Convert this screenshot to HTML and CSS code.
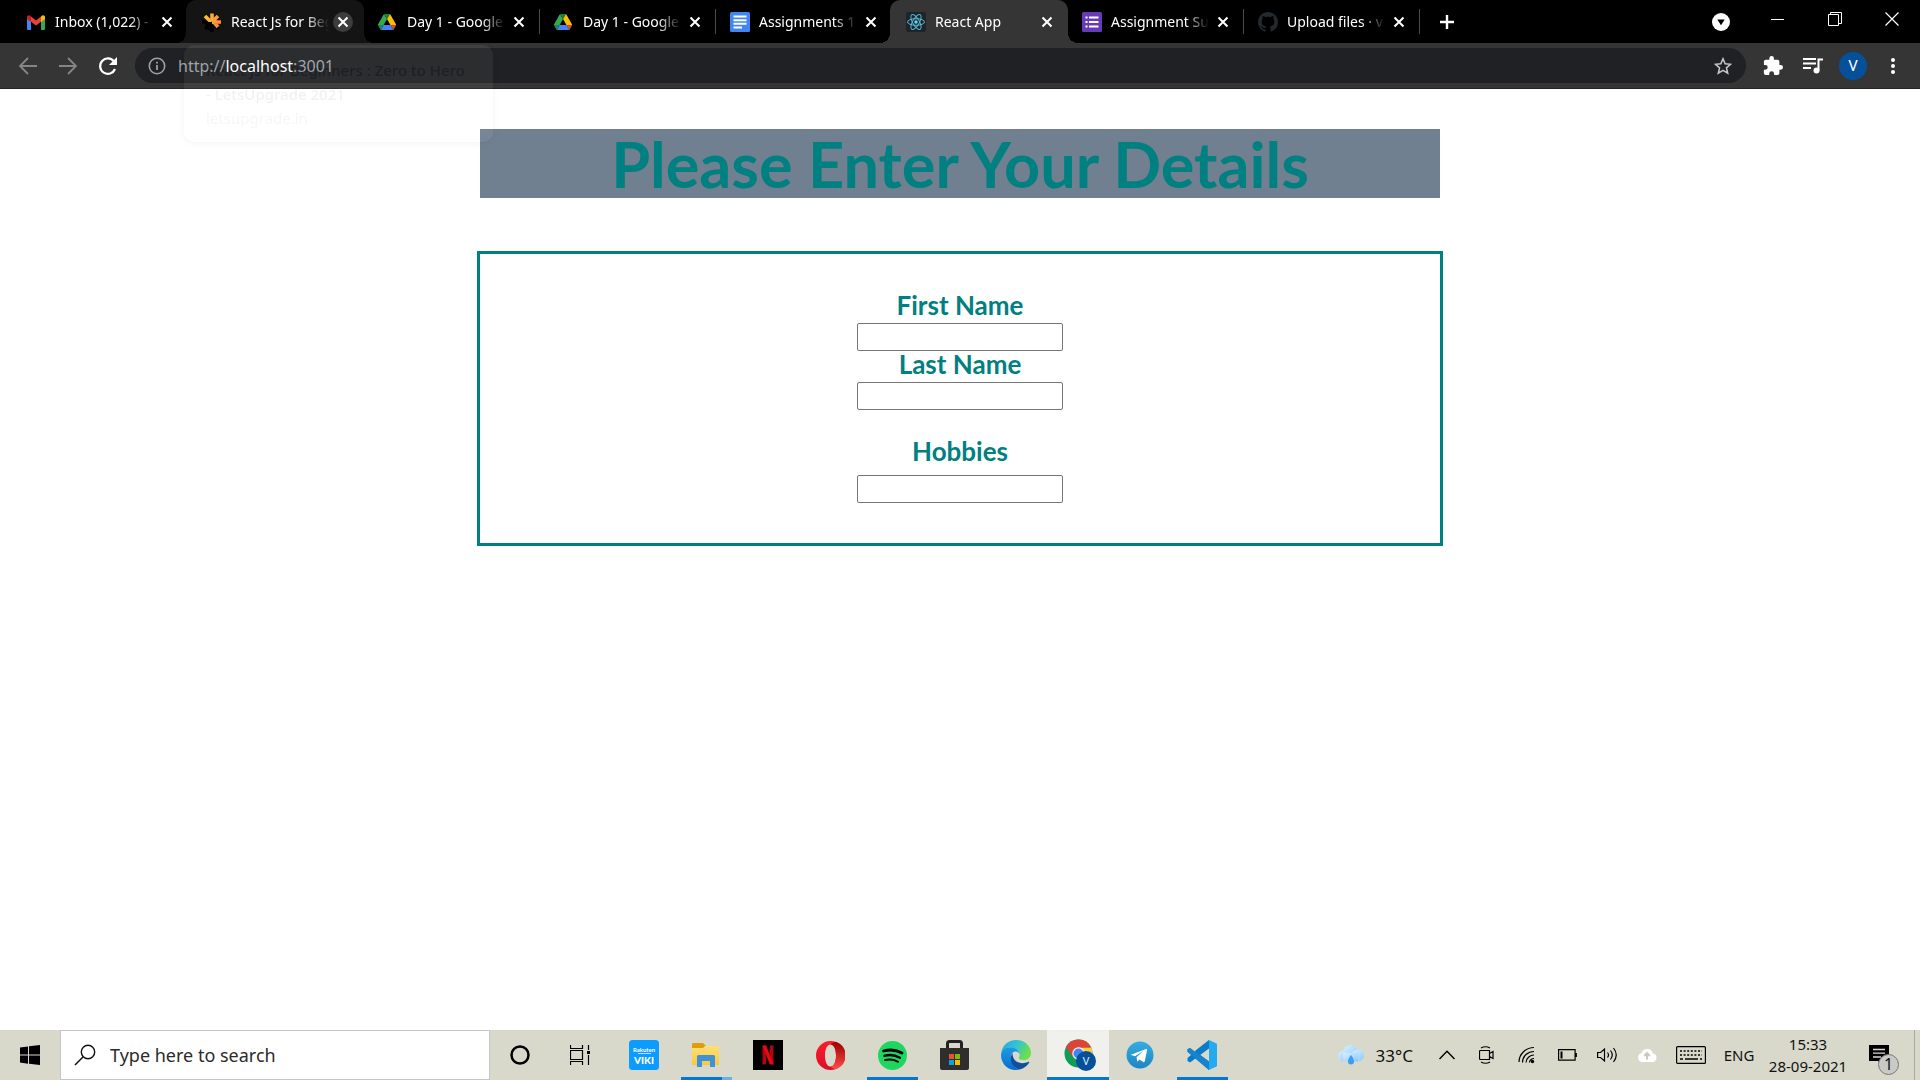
FILE: index.html
```html
<!DOCTYPE html>
<html lang="en">
<head>
<meta charset="utf-8">
<title>React App</title>
<link rel="stylesheet" href="styles.css">
</head>
<body>
<svg class="defs" aria-hidden="true">
  <defs>
    <linearGradient id="operaRed" x1="0" y1="0" x2="0" y2="1"><stop offset="0" stop-color="#ff1b2d"/><stop offset="1" stop-color="#d8102a"/></linearGradient>
    <linearGradient id="operaDark" x1="0" y1="0" x2="0" y2="1"><stop offset="0" stop-color="#9c0000"/><stop offset="1" stop-color="#ff4b4b"/></linearGradient>
    <linearGradient id="edgeTop" x1="0" y1="0" x2="1" y2="0.4"><stop offset="0" stop-color="#2aa5dc"/><stop offset="0.5" stop-color="#2fc2d8"/><stop offset="1" stop-color="#6be04a"/></linearGradient>
    <linearGradient id="edgeLeft" x1="0" y1="0" x2="0" y2="1"><stop offset="0" stop-color="#1b9de2"/><stop offset="1" stop-color="#0a6bd0"/></linearGradient>
    <linearGradient id="folder" x1="0" y1="0" x2="0" y2="1"><stop offset="0" stop-color="#ffdf78"/><stop offset="1" stop-color="#f9c840"/></linearGradient>
    <linearGradient id="cloudFill" x1="0" y1="0" x2="1" y2="1"><stop offset="0" stop-color="#d8eeff"/><stop offset="0.5" stop-color="#b4ddfb"/><stop offset="1" stop-color="#8ac8f8"/></linearGradient>
    <linearGradient id="tele" x1="0" y1="0" x2="0" y2="1"><stop offset="0" stop-color="#35ade1"/><stop offset="1" stop-color="#1c86c4"/></linearGradient>
    <linearGradient id="spark" x1="0" y1="0" x2="1" y2="0.3"><stop offset="0" stop-color="#ffc928"/><stop offset="1" stop-color="#ff8a3d"/></linearGradient>
    <symbol id="close" viewBox="0 0 12 12"><path d="M1.500 1.500l9 9M10.500 1.500l-9 9" fill="none" stroke="currentColor" stroke-width="2"/></symbol>
    <symbol id="drive" viewBox="0 0 87 78">
      <path fill="#1e8e3e" d="M6.600 66.850l3.850 6.650c.8 1.400 1.950 2.500 3.300 3.300L27.500 53H0c0 1.550.4 3.100 1.200 4.500z"/>
      <path fill="#34a853" d="M43.650 25L29.900 1.200c-1.350.8-2.500 1.900-3.300 3.300L1.200 48.500A9 9 0 0 0 0 53h27.500z"/>
      <path fill="#ea4335" d="M73.550 76.800c1.350-.8 2.500-1.900 3.300-3.300l1.600-2.750L86.100 57.500c.8-1.400 1.200-2.950 1.200-4.500H59.800l5.850 11.500z"/>
      <path fill="#188038" d="M43.650 25L57.400 1.200C56.050.4 54.500 0 52.900 0H34.400c-1.600 0-3.150.45-4.500 1.200z"/>
      <path fill="#4285f4" d="M59.800 53H27.500L13.750 76.800c1.350.8 2.900 1.200 4.500 1.200h50.800c1.600 0 3.150-.45 4.500-1.200z"/>
      <path fill="#fbbc04" d="M73.400 26.500L60.700 4.500c-.8-1.400-1.950-2.500-3.300-3.300L43.650 25 59.800 53h27.450c0-1.550-.4-3.100-1.200-4.500z"/>
    </symbol>
  </defs>
</svg>

<header class="browser">
  <nav class="tabs" aria-label="Tabs">
    <div class="tab">
      <svg class="favicon" viewBox="0 0 20 20"><path fill="#4285f4" d="M1 6l4 3v9H2.200A1.200 1.200 0 0 1 1 16.800z"/><path fill="#34a853" d="M15 9l4-3v10.800a1.200 1.200 0 0 1-1.200 1.200H15z"/><path fill="#fbbc04" d="M15 4.500l1-.8c1.200-1 3-.2 3 1.400V7l-4 3z"/><path fill="#ea4335" d="M5 9.800V4.600l5 3.800 5-3.800v5.200l-5 3.800z"/><path fill="#c5221f" d="M1 5.100C1 3.500 2.800 2.700 4 3.700l1 .8V10L1 7z"/></svg>
      <a class="title" href="#">Inbox (1,022) - m</a>
      <button class="close" aria-label="Close tab"><svg><use href="#close"/></svg></button>
    </div>
    <div class="tab hovered">
      <svg class="favicon" viewBox="0 0 20 20"><g fill="none" stroke-width="3.600"><path stroke="#000" d="M0 10h10M3 17l7-7M10 20V10M17 17l-5-5"/><path stroke="url(#spark)" d="M3 4l6 6M10 1.500l.1 8M16 4l-6 6M10 10.100l9-.1M11 9l5 6"/></g><path d="M2 10h8v8H6z"/></svg>
      <a class="title" href="#">React Js for Beg</a>
      <button class="close" aria-label="Close tab"><svg><use href="#close"/></svg></button>
    </div>
    <div class="tab">
      <svg class="favicon small"><use href="#drive"/></svg>
      <a class="title" href="#">Day 1 - Google</a>
      <button class="close" aria-label="Close tab"><svg><use href="#close"/></svg></button>
    </div>
    <div class="tab divided">
      <svg class="favicon small"><use href="#drive"/></svg>
      <a class="title" href="#">Day 1 - Google</a>
      <button class="close" aria-label="Close tab"><svg><use href="#close"/></svg></button>
    </div>
    <div class="tab divided">
      <svg class="favicon" viewBox="0 0 20 20"><rect width="20" height="20" rx="1.500" fill="#4285f4"/><path stroke="#fff" stroke-width="2" d="M3.500 4.500h13M3.500 8.200h13M3.500 11.800h13M3.500 15.500h8.500"/></svg>
      <a class="title" href="#">Assignments 1</a>
      <button class="close" aria-label="Close tab"><svg><use href="#close"/></svg></button>
    </div>
    <div class="tab active">
      <svg class="favicon" viewBox="0 0 20 20"><rect width="20" height="20" rx="2" fill="#20232a"/><g fill="none" stroke="#53b9d3" stroke-width="1"><ellipse cx="10" cy="10" rx="8.500" ry="3.300"/><ellipse cx="10" cy="10" rx="8.500" ry="3.300" transform="rotate(60 10 10)"/><ellipse cx="10" cy="10" rx="8.500" ry="3.300" transform="rotate(120 10 10)"/></g><circle cx="10" cy="10" r="1.700" fill="#61dafb"/></svg>
      <a class="title" href="#">React App</a>
      <button class="close" aria-label="Close tab"><svg><use href="#close"/></svg></button>
    </div>
    <div class="tab">
      <svg class="favicon" viewBox="0 0 20 20"><rect width="20" height="20" rx="1.500" fill="#673ab7"/><path stroke="#fff" stroke-width="2" d="M3.500 5.500h2M7 5.500h9.500M3.500 10h2M7 10h9.500M3.500 14.500h2M7 14.500h9.500"/></svg>
      <a class="title" href="#">Assignment Su</a>
      <button class="close" aria-label="Close tab"><svg><use href="#close"/></svg></button>
    </div>
    <div class="tab divided">
      <svg class="favicon" viewBox="0 0 16 16"><path fill="#24292e" d="M8 0C3.580 0 0 3.580 0 8c0 3.540 2.290 6.530 5.470 7.590.4.070.55-.17.55-.38 0-.19-.01-.82-.01-1.490-2.010.37-2.530-.49-2.690-.94-.09-.23-.48-.94-.82-1.130-.28-.15-.68-.52-.01-.53.63-.01 1.080.58 1.230.82.72 1.210 1.870.87 2.330.66.070-.52.28-.87.51-1.070-1.780-.2-3.640-.89-3.640-3.950 0-.87.31-1.590.82-2.150-.08-.2-.36-1.020.08-2.120 0 0 .67-.21 2.200.82.64-.18 1.320-.27 2-.27s1.360.09 2 .27c1.530-1.040 2.200-.82 2.200-.82.44 1.100.16 1.920.08 2.120.51.56.82 1.270.82 2.150 0 3.070-1.870 3.750-3.650 3.950.29.25.54.73.54 1.480 0 1.070-.01 1.930-.01 2.200 0 .21.15.46.55.38A8 8 0 0 0 16 8c0-4.420-3.580-8-8-8z"/></svg>
      <a class="title" href="#">Upload files · v</a>
      <button class="close" aria-label="Close tab"><svg><use href="#close"/></svg></button>
    </div>
    <button class="newtab divided" aria-label="New tab"><svg viewBox="0 0 16 16"><path stroke="#fff" stroke-width="2.400" d="M8 1v14M1 8h14"/></svg></button>
    <div class="window">
      <button aria-label="Search tabs"><svg width="18" height="18" viewBox="0 0 18 18"><circle cx="9" cy="9" r="9" fill="#fff"/><path d="M5.300 6.500h7.400L9 12.200z" fill="#000"/></svg></button>
      <button aria-label="Minimize"><svg class="raised" width="14" height="14" viewBox="0 0 14 14"><path d="M0 7.500h13" stroke="#fff"/></svg></button>
      <button aria-label="Restore"><svg class="raised" width="14" height="14" viewBox="0 0 14 14"><path d="M.5 2.500h10v11H.500zM2.500 2.500v-2h11v11h-3" fill="none" stroke="#fff"/></svg></button>
      <button aria-label="Close"><svg class="raised" width="14" height="14" viewBox="0 0 14 14"><path d="M.5.500l13 13M13.500.500l-13 13" stroke="#fff" stroke-width="1.200"/></svg></button>
    </div>
  </nav>
  <div class="toolbar">
    <button aria-label="Back"><svg width="20" height="20" viewBox="0 0 20 20"><path d="M19 10H2.500M10 2L2 10l8 8" fill="none" stroke="#858585" stroke-width="1.800"/></svg></button>
    <button aria-label="Forward"><svg width="20" height="20" viewBox="0 0 20 20"><path d="M1 10h16.500M10 2l8 8-8 8" fill="none" stroke="#858585" stroke-width="1.800"/></svg></button>
    <button aria-label="Reload"><svg width="20" height="20" viewBox="0 0 20 20"><path d="M17 13a7.700 7.700 0 1 1-1-7.500" fill="none" stroke="#fff" stroke-width="2.200"/><path d="M19 1v8h-8z" fill="#fff"/></svg></button>
    <form class="omnibox">
      <svg width="18" height="18" viewBox="0 0 18 18"><circle cx="9" cy="9" r="7.700" fill="none" stroke="#9aa0a6" stroke-width="1.600"/><path d="M9 8v5M9 4.800v1.800" stroke="#9aa0a6" stroke-width="1.800"/></svg>
      <a class="url" href="#">http://<b>localhost</b>:3001</a>
      <button type="button" aria-label="Bookmark"><svg width="18" height="18" viewBox="0 0 20 20"><path d="M10 2l2.400 5.600 6 .5-4.600 3.900 1.400 5.900L10 14.800l-5.200 3.100L6.200 12 1.600 8.100l6-.5z" fill="none" stroke="#c5c7ca" stroke-width="1.700"/></svg></button>
    </form>
    <button aria-label="Extensions"><svg width="20" height="20" viewBox="1 1 22 22"><path fill="#fff" d="M20.500 11H19V7a2 2 0 0 0-2-2h-4V3.500a2.500 2.500 0 0 0-5 0V5H4a2 2 0 0 0-2 2v3.800h1.500a2.700 2.700 0 0 1 0 5.400H2V20a2 2 0 0 0 2 2h3.800v-1.500a2.700 2.700 0 0 1 5.400 0V22H17a2 2 0 0 0 2-2v-4h1.500a2.500 2.500 0 0 0 0-5z"/></svg></button>
    <button aria-label="Media"><svg width="20" height="18" viewBox="0 0 20 18"><path d="M0 2h13M0 6.500h13M0 11h8" stroke="#fff" stroke-width="1.800"/><path d="M15.500 13.500V2.500h4.500" fill="none" stroke="#fff" stroke-width="2"/><circle cx="13.500" cy="13.500" r="3" fill="#fff"/></svg></button>
    <button class="avatar" aria-label="Profile">V</button>
    <button aria-label="Menu"><svg width="4" height="16" viewBox="0 0 4 16"><g fill="#fff"><circle cx="2" cy="2" r="2"/><circle cx="2" cy="8" r="2"/><circle cx="2" cy="14" r="2"/></g></svg></button>
  </div>
  <div class="tooltip">
    <strong>React Js for Beginners : Zero to Hero<br>- LetsUpgrade 2021</strong>
    <span>letsupgrade.in</span>
  </div>
</header>

<main class="page">
  <h1>Please Enter Your Details</h1>
  <form class="details">
    <label for="first">First Name</label>
    <input id="first" type="text">
    <label for="last">Last Name</label>
    <input id="last" type="text">
    <label class="spaced" for="hobbies">Hobbies</label>
    <input id="hobbies" type="text">
  </form>
</main>

<footer class="taskbar">
  <button class="start" aria-label="Start"><svg width="20" height="20" viewBox="0 0 20 20"><path d="M0 2.500l8-1.100v8.200H0zM9 1.200L20 0v9.600H9zM0 10.500h8v8.200l-8-1.100zM9 10.500h11V20L9 18.800z"/></svg></button>
  <label class="search">
    <svg width="22" height="22" viewBox="0 0 22 22"><circle cx="14" cy="8" r="6.700" fill="none" stroke="#111" stroke-width="1.400"/><path d="M9.200 12.800L1 21" stroke="#111" stroke-width="1.500"/></svg>
    <input type="text" placeholder="Type here to search" aria-label="Search">
  </label>
  <button class="start" aria-label="Cortana"><svg width="20" height="20" viewBox="0 0 20 20"><circle cx="10" cy="10" r="8.500" fill="none" stroke="#000" stroke-width="2.500"/></svg></button>
  <button class="start" aria-label="Task view"><svg width="20" height="20" viewBox="0 0 20 20"><path d="M.5 0v3.500h12V0M.500 5.500h12v9H.500zM.500 20v-3.500h12V20M18.500 0v5M18.500 10v10" fill="none" stroke="#000" stroke-width="1.200"/><path d="M17 6h3v3h-3z"/></svg></button>
  <div class="apps">
    <button aria-label="Viki"><svg width="30" height="30" viewBox="0 0 30 30"><rect width="30" height="30" rx="3.500" fill="#0c9bff"/><g fill="#fff" font-family="Lato, sans-serif" text-anchor="middle"><text x="15" y="12" font-size="6" font-weight="700">Rakuten</text><text x="15" y="24" font-size="10" font-weight="900">VIKI</text></g><path d="M9 13.500h13" stroke="#fff" stroke-width=".7"/></svg></button>
    <button class="running many" aria-label="File Explorer"><svg width="28" height="24" viewBox="0 0 28 24"><path d="M1 0h10l3 3-2 2H0V1z" fill="#e09c0a"/><path d="M0 5h11l2-2h13a1 1 0 0 1 1 1v18H0z" fill="url(#folder)"/><path d="M5 24V13.500A1.500 1.500 0 0 1 6.500 12h15a1.500 1.500 0 0 1 1.500 1.500V24h-5v-6h-8v6z" fill="#3e93d6"/></svg></button>
    <button aria-label="Netflix"><svg width="30" height="30" viewBox="0 0 30 30"><path d="M0 0h30v30H0z"/><path d="M9.500 5.500h3.700v18.800l-3.700.3zM16.800 5.500h3.700v19.100l-3.700-.3z" fill="#b1060f"/><path d="M9.500 5.500h3.700l7.300 19.100-3.700-.3z" fill="#e50914"/></svg></button>
    <button aria-label="Opera"><svg width="29" height="29" viewBox="0 0 29 29"><path d="M14.500 0a14.500 14.500 0 1 0 0 29 14.500 14.500 0 0 0 0-29zm0 3.500c3.600 0 5.500 5 5.500 11s-1.900 11-5.500 11S9 20.500 9 14.500s1.900-11 5.500-11z" fill="url(#operaRed)"/><path d="M14.500 3.500c1.700-1.900 4-2.800 6.500-2.300a14.500 14.500 0 0 1 0 26.500c-2.500.5-4.800-.3-6.500-2.200 3.600 0 5.500-5 5.500-11s-1.900-11-5.500-11z" fill="url(#operaDark)"/></svg></button>
    <button class="running" aria-label="Spotify"><svg width="29" height="29" viewBox="0 0 29 29"><circle cx="14.500" cy="14.500" r="14.500" fill="#1ed760"/><g fill="none" stroke="#000" stroke-linecap="round"><path d="M5.500 10c6.500-1.800 13-1 18.500 2" stroke-width="2.800"/><path d="M6.300 14.800c5.400-1.500 11-.8 15.700 1.900" stroke-width="2.300"/><path d="M7 19c4.700-1.100 9.200-.5 13 1.700" stroke-width="1.900"/></g></svg></button>
    <button aria-label="Microsoft Store"><svg width="29" height="30" viewBox="0 0 29 30"><path d="M7.500 11V3.500a2 2 0 0 1 2-2h10a2 2 0 0 1 2 2V11" fill="none" stroke="#222" stroke-width="3"/><path d="M0 8h29v20a2 2 0 0 1-2 2H2a2 2 0 0 1-2-2z" fill="#2e2e2e"/><path d="M9 14h5v5H9z" fill="#f25022"/><path d="M15 14h5v5h-5z" fill="#7fba00"/><path d="M9 20h5v5H9z" fill="#00a4ef"/><path d="M15 20h5v5h-5z" fill="#ffb900"/></svg></button>
    <button aria-label="Edge"><svg width="30" height="30" viewBox="0 0 30 30"><path d="M0 14C1 5.500 7 0 15.200 0 24 0 30 6.200 30 13c0 4.500-3.500 7-7 7-3 0-5.200-1-5.200-2 0-.8 1-1.200 1-3.300C18.800 11 14 7.500 9 7.500 5 7.500 1.500 10 0 14z" fill="url(#edgeTop)"/><path d="M0 15c.5-5 4.500-7.800 9-7.800 5.500 0 9.800 3.800 9.800 7.500-.5-2-2-3.300-4-3.300-3.500 0-5.300 3.300-4.800 7C10.700 24 14.500 29 18.500 29.600 8 32 0 24.500 0 15z" fill="url(#edgeLeft)"/><path d="M11.500 13c-3.600 5.500-1.500 14.500 7 16.600 4.500-1 8-3.800 9.700-7 .4-.8-.3-1.200-1-.8-6.500 3.500-15.700.7-15.700-8.800z" fill="#0f4f9e"/></svg></button>
    <button class="current" aria-label="Chrome"><svg width="32" height="32" viewBox="0 0 32 32"><circle cx="14.500" cy="14.500" r="14" fill="#0f9d58"/><path d="M14.500 14.500L2.200 7.700A14 14 0 0 1 27 8.500z" fill="#db4437"/><path d="M14.500 8.500h12.700a14 14 0 0 1-12 20z" fill="#ffcd40"/><path d="M2.200 7.700l6.300 10 6-9.200h12.700L14 5z" fill="#db4437"/><circle cx="14.500" cy="14.500" r="6.200" fill="#f1f1f1"/><circle cx="14.500" cy="14.500" r="5" fill="#4285f4"/><circle cx="22" cy="22" r="10" fill="#06509a"/><text x="22" y="26" font-family="Roboto, sans-serif" font-size="11" fill="#dce8f5" text-anchor="middle">V</text></svg></button>
    <button aria-label="Telegram"><svg width="28" height="28" viewBox="0 0 28 28"><circle cx="14" cy="14" r="13.500" fill="url(#tele)"/><path d="M5.500 13.600L20 8c.8-.3 1.400.2 1.100 1.300l-2.400 11.200c-.2.800-.8 1-1.500.6l-3.700-2.700-2.200 2.300-.8-4.500 6.700-6.200-8.300 5.200-3.500-1.100c-.7-.2-.7-.7.100-.500z" fill="#fff"/></svg></button>
    <button class="running" aria-label="Visual Studio Code"><svg width="30" height="30" viewBox="0 0 30 30"><path d="M22 0L8.500 12.500 3 8 .5 9.300v2.500L22 30v-8.500L8 11z" fill="#0f6fb5"/><path d="M22 0v8.500L3 22.500.500 21v-3z" fill="#0a7bc9"/><path d="M.5 11.700V9.300L3 8l19 13.500V30z" fill="#1583cd"/><path d="M22 0l7 3.200c.6.300 1 .8 1 1.500v20.600c0 .7-.4 1.200-1 1.500L22 30z" fill="#25a9f0"/></svg></button>
  </div>
  <div class="tray">
    <button class="weather"><svg width="26" height="20" viewBox="0 0 26 20"><g fill="url(#cloudFill)"><circle cx="5.500" cy="11" r="5.500"/><circle cx="12.500" cy="7.500" r="7.500"/><circle cx="20" cy="10.500" r="6"/><rect x="5" y="8" width="15" height="8.500"/></g><path d="M13 10c2 2.500 3 4.500 3 6.500a3 3 0 0 1-6 0c0-2 1-4 3-6.500z" fill="#3f9cf0"/></svg>33°C</button>
    <button aria-label="Show hidden icons"><svg width="16" height="10" viewBox="0 0 16 10"><path d="M.5 9L8 1.200 15.500 9" fill="none" stroke="#000" stroke-width="1.400"/></svg></button>
    <button aria-label="Meet now"><svg width="16" height="18" viewBox="0 0 16 18"><path d="M1.500 4.500h9v9h-9a1 1 0 0 1-1-1v-7a1 1 0 0 1 1-1zM10.500 7.500l3.500-2v7l-3.500-2M2 2q4.500-2.500 9 0M2 16q4.500 2.500 9 0" fill="none" stroke="#000" stroke-width="1.200"/></svg></button>
    <button aria-label="Network"><svg width="18" height="18" viewBox="0 0 18 18"><g fill="none" stroke="#000" stroke-width="1.200"><path d="M1 16C1 8 8 1.500 16 1.500M4.500 16.500C4.500 10 10 5.500 16 5.500M8 16.500c0-4 4-7.500 8-7.500M11.500 16.500c0-2 2-4 4.500-4"/></g><circle cx="14.500" cy="15.500" r="1.700"/></svg></button>
    <button aria-label="Battery"><svg width="19" height="12" viewBox="0 0 19 12"><path d="M.6.600h16.500v10.500H.600zM18.300 4v4" fill="none" stroke="#000" stroke-width="1.200"/><path d="M2.500 2.500h2v7h-2z"/></svg></button>
    <button aria-label="Volume"><svg width="21" height="18" viewBox="0 0 21 18"><path d="M.6 6.500h3L7.500 3v12l-3.900-3.500h-3zM10.500 6.500q2 2.500 0 5M13.500 4.500q3.500 4.500 0 9M16.500 2q5.500 7 0 14" fill="none" stroke="#000" stroke-width="1.200"/></svg></button>
    <button aria-label="Backup"><svg width="20" height="14" viewBox="0 0 20 14"><path d="M5 14a4.600 4.600 0 0 1-.5-9A6 6 0 0 1 16 5.500 4.300 4.300 0 0 1 15.500 14z" fill="#fff"/><path d="M10 11.500V6M7.200 8L10 5.200 12.800 8" fill="none" stroke="#c9cab9" stroke-width="2"/></svg></button>
    <button class="wide" aria-label="Keyboard"><svg width="30" height="18" viewBox="0 0 30 18"><rect x=".6" y=".6" width="28.800" height="16.800" rx="1" fill="none" stroke="#000" stroke-width="1.200"/><path d="M4 5h22M4 9h22" stroke="#000" stroke-width="1.400" stroke-dasharray="2 1.600"/><path d="M4 13h3M9 13h13M24 13h2" stroke="#000" stroke-width="1.400"/></svg></button>
    <button class="wide">ENG</button>
    <button class="clock"><time>15:33</time><time>28-09-2021</time></button>
    <button class="notes" aria-label="Notifications"><svg width="20" height="20" viewBox="0 0 20 20"><path d="M0 0h20v16h-7v4l-4-4H0z"/><path d="M4 4.500h12M4 8.200h12M4 12h8" stroke="#d9d9cb" stroke-width="1.300"/></svg><span class="badge">1</span></button>
  </div>
</footer>
</body>
</html>
```
FILE: styles.css
```css
* { box-sizing: border-box; }
body {
  margin: 0;
  min-height: 100vh;
  display: flex;
  flex-direction: column;
  background: #fff;
  font-family: "Noto Sans", sans-serif;
}
button {
  display: flex;
  align-items: center;
  justify-content: center;
  margin: 0;
  padding: 0;
  border: 0;
  background: none;
  color: inherit;
  font: inherit;
}
a { color: inherit; text-decoration: none; }
.defs { position: absolute; width: 0; height: 0; }

/* Browser chrome */
.browser { position: relative; color: #fff; }
.tabs {
  display: flex;
  height: 43px;
  padding-left: 11px;
  background: #000;
}
.tab {
  position: relative;
  display: flex;
  align-items: center;
  width: 176px;
  padding: 0 10px 0 15px;
  font-size: 14px;
}
.favicon { flex: none; width: 20px; height: 20px; margin-right: 9px; }
.favicon.small { width: 18px; margin-right: 11px; }
.title {
  flex: 1;
  overflow: hidden;
  white-space: nowrap;
  line-height: 20px;
  -webkit-mask-image: linear-gradient(90deg, #000 76%, transparent);
  mask-image: linear-gradient(90deg, #000 76%, transparent);
}
.close { flex: none; width: 20px; height: 20px; margin-left: 4px; border-radius: 50%; }
.close svg { width: 12px; height: 12px; }
.hovered, .active {
  width: 178px;
  margin: 0 -1px;
  padding: 0 11px 0 16px;
  border-radius: 10px 10px 0 0;
}
.hovered { background: #141414; }
.hovered .close { background: #3c3c3c; }
.active { background: #353535; }
.active::before, .active::after, .hovered::before, .hovered::after {
  content: "";
  position: absolute;
  bottom: 0;
  width: 10px;
  height: 10px;
}
.active::before, .hovered::before { right: 100%; }
.active::after, .hovered::after { left: 100%; }
.active::before { background: radial-gradient(circle at 0 0, transparent 10px, #353535 10px); }
.active::after { background: radial-gradient(circle at 100% 0, transparent 10px, #353535 10px); }
.hovered::before { background: radial-gradient(circle at 0 0, transparent 10px, #141414 10px); }
.hovered::after { background: radial-gradient(circle at 100% 0, transparent 10px, #141414 10px); }
.divided {
  background: linear-gradient(#4a4a4a, #4a4a4a) 0 50% / 1px 25px no-repeat;
}
.newtab { width: 56px; }
.newtab svg { width: 16px; height: 16px; }
.window { display: flex; margin-left: auto; }
.window button { width: 57px; }
.raised { margin-bottom: 6px; }

.toolbar {
  display: flex;
  align-items: center;
  height: 46px;
  padding: 0 7px 0 8px;
  background: #353535;
  border-bottom: 1px solid #242424;
}
.toolbar > button { width: 40px; height: 40px; }
.omnibox {
  flex: 1;
  display: flex;
  align-items: center;
  height: 35px;
  margin: 0 7px;
  padding: 0 14px 0 13px;
  border-radius: 18px;
  background: #202124;
}
.url { flex: 1; margin-left: 12px; font-size: 16px; line-height: 24px; color: #9aa0a6; }
.url b { font-weight: 400; color: #fff; }
.toolbar > .avatar {
  width: 28px;
  height: 28px;
  margin: 0 6px;
  border-radius: 50%;
  background: #06509a;
  font: 15px/28px Roboto, sans-serif;
}
.tooltip {
  position: absolute;
  top: 45px;
  left: 184px;
  width: 309px;
  padding: 13px 22px 12px;
  border-radius: 10px;
  background: #fff;
  box-shadow: 0 1px 6px #000;
  color: #000;
  font-size: 15px;
  line-height: 24px;
  white-space: nowrap;
  opacity: 0.05;
  pointer-events: none;
}
.tooltip strong { font-weight: 500; }
.tooltip span { display: block; color: #666; }

/* Page */
.page {
  flex: 1;
  display: flex;
  flex-direction: column;
  align-items: center;
  padding-top: 40px;
  color: teal;
  font-family: "Trebuchet MS", Lato, sans-serif;
}
h1 {
  width: 50%;
  margin: 0 0 53px;
  background: slategray;
  font-size: 63px;
  line-height: 69px;
  font-weight: 700;
  text-align: center;
}
.details {
  display: flex;
  flex-direction: column;
  align-items: center;
  width: calc(50% + 6px);
  padding: 38px 0 40px;
  border: 3px solid teal;
}
.details label {
  margin-bottom: 5px;
  font-size: 26px;
  line-height: 26px;
  font-weight: 700;
}
.details .spaced { margin: 28px 0 11px; }
.details input {
  width: 206px;
  height: 28px;
  border: 1px solid #767676;
  border-radius: 2px;
  background: #fff;
}

/* Taskbar */
.taskbar {
  display: flex;
  height: 50px;
  background: #d9d9cb;
  color: #111;
}
.start { width: 60px; }
.search {
  display: flex;
  align-items: center;
  width: 430px;
  padding-left: 13px;
  border: 1px solid #c5c6c6;
  background: #fff;
}
.search input {
  flex: 1;
  padding: 0 0 0 14px;
  border: 0;
  outline: 0;
  background: none;
  font: 18px/24px "Noto Sans", sans-serif;
}
.search input::placeholder { color: #2b2b2b; opacity: 1; }
.apps { display: flex; padding-left: 3px; }
.apps button { width: 62px; }
.running {
  background: linear-gradient(#0078d7, #0078d7) 50% 100% / 51px 3px no-repeat;
}
.many {
  background: linear-gradient(90deg, #0078d7 41px, #6bb0e6 41px) 50% 100% / 51px 3px no-repeat;
}
.current { background: #f0f0ec; border-bottom: 3px solid #0078d7; }
.current svg { margin: 3px 0 0 3px; }
.tray {
  display: flex;
  margin-left: auto;
  margin-right: 5px;
  border-right: 1px solid #aaab9f;
}
.tray button { width: 40px; font-size: 15px; }
.tray .weather { width: auto; gap: 12px; margin-right: 14px; font-size: 17px; }
.tray .wide { width: 48px; }
.tray .clock { flex-direction: column; width: 90px; font-size: 15px; line-height: 22px; }
.tray .notes { position: relative; width: 61px; padding-right: 9px; }
.badge {
  position: absolute;
  top: 24px;
  left: 25px;
  width: 21px;
  height: 21px;
  border: 1px solid #777;
  border-radius: 50%;
  background: #c9c9c6;
  font-size: 16px;
  line-height: 19px;
}
```
